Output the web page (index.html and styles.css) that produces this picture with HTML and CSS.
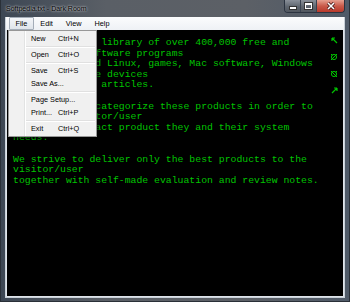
FILE: index.html
```html
<!DOCTYPE html>
<html>
<head>
<title>Softpedia.txt - Dark Room</title>
<meta charset="UTF-8">
<link rel="stylesheet" href="styles.css">
</head>
<body>
<div class="window">
<div class="titlebar">
<span class="title">Softpedia.txt - Dark Room</span>
<div class="caption-btns">
<div class="cbtn min"><span class="min-glyph"></span></div>
<div class="cbtn max"><span class="max-glyph"></span></div>
<div class="cbtn close">
<svg width="10" height="8" viewBox="0 0 10 8"><path d="M2 1 L8 7 M8 1 L2 7" stroke="#3a1010" stroke-width="3"/><path d="M2 1 L8 7 M8 1 L2 7" stroke="#fff" stroke-width="1.6"/></svg>
</div>
</div>
</div>
<div class="client">
<div class="menubar">
<span class="menu-item active">File</span>
<span class="menu-item">Edit</span>
<span class="menu-item">View</span>
<span class="menu-item">Help</span>
</div>
<div class="editor">
<pre class="doc">Softpedia is a library of over 400,000 free and
free-to-try software programs
for Windows and Linux, games, Mac software, Windows
drivers, mobile devices
and IT-related articles.

We review and categorize these products in order to
allow the visitor/user
to find the exact product they and their system
needs.

We strive to deliver only the best products to the
visitor/user
together with self-made evaluation and review notes.</pre>
<div class="side-icons">
<svg width="7" height="7" viewBox="0 0 7 7"><path d="M1 1 L6 6 M1 1 L4 1 M1 1 L1 4" stroke="#00c400" stroke-width="1.2" fill="none"/></svg>
<svg width="8" height="8" viewBox="0 0 8 8"><circle cx="4" cy="4" r="2.6" stroke="#00c400" stroke-width="1" fill="none"/><path d="M1 7 L7 1 M1 1 L2.5 2.5" stroke="#00c400" stroke-width="1" fill="none"/></svg>
<svg width="8" height="8" viewBox="0 0 8 8"><circle cx="4" cy="4" r="2.6" stroke="#00c400" stroke-width="1" fill="none"/><path d="M1 1 L7 7 M7 1 L5.5 2.5" stroke="#00c400" stroke-width="1" fill="none"/></svg>
<svg width="7" height="7" viewBox="0 0 7 7"><path d="M1 6 L6 1 M6 1 L3 1 M6 1 L6 4" stroke="#00c400" stroke-width="1.2" fill="none"/></svg>
</div>
</div>
</div>
<div class="dropdown">
<div class="dd-row"><span class="dd-label">New</span><span class="dd-key">Ctrl+N</span></div>
<div class="dd-sep"></div>
<div class="dd-row"><span class="dd-label">Open</span><span class="dd-key">Ctrl+O</span></div>
<div class="dd-sep"></div>
<div class="dd-row"><span class="dd-label">Save</span><span class="dd-key">Ctrl+S</span></div>
<div class="dd-row"><span class="dd-label">Save As...</span><span class="dd-key"></span></div>
<div class="dd-sep"></div>
<div class="dd-row"><span class="dd-label">Page Setup...</span><span class="dd-key"></span></div>
<div class="dd-row"><span class="dd-label">Print...</span><span class="dd-key">Ctrl+P</span></div>
<div class="dd-sep"></div>
<div class="dd-row"><span class="dd-label">Exit</span><span class="dd-key">Ctrl+Q</span></div>
</div>
</div>
</body>
</html>
```
FILE: styles.css
```css
body {
    margin: 0;
    font-family: "Liberation Sans", Arial, sans-serif;
    background: #fff;
}
.window {
    position: relative;
    width: 350px;
    height: 302px;
    box-sizing: border-box;
    display: flex;
    flex-direction: column;
    padding: 0 4px 3px 4px;
    background: linear-gradient(90deg, #3d4754 0%, #5a5f66 30%, #5c6066 70%, #4f5a68 100%);
    border: 1px solid #2a3038;
    border-top: none;
}
.titlebar {
    height: 17px;
    display: flex;
    justify-content: space-between;
    align-items: flex-start;
}
.title {
    font-size: 7px;
    color: #000;
    margin: 5px 0 0 1px;
    text-shadow: 0 0 3px rgba(255,255,255,0.7), 0 0 2px rgba(255,255,255,0.6);
}
.caption-btns {
    display: flex;
    margin-right: 0;
    border: 1px solid #2b3340;
    border-top: none;
    border-radius: 0 0 4px 4px;
    overflow: hidden;
}
.cbtn {
    height: 12px;
    display: flex;
    align-items: center;
    justify-content: center;
    border-left: 1px solid #3a4350;
}
.cbtn.min, .cbtn.max {
    width: 15px;
    background: linear-gradient(#8a9099, #5f666f 55%, #50565e);
}
.cbtn.min {
    border-left: none;
}
.cbtn.close {
    width: 27px;
    background: linear-gradient(#e6a090, #c95a4a 50%, #b8382a);
}
.min-glyph {
    width: 6px;
    height: 2px;
    background: #fff;
    border: 1px solid #333;
    margin-top: 4px;
}
.max-glyph {
    width: 5px;
    height: 3px;
    border: 1px solid #fff;
    border-top-width: 2px;
    outline: 1px solid #333;
}
.client {
    flex: 1;
    display: flex;
    flex-direction: column;
    border: 1px solid #c8d0d8;
    border-top: none;
    background: #dfe4ea;
    padding: 0 1px 1px 1px;
}
.menubar {
    height: 13px;
    display: flex;
    align-items: center;
    padding-left: 3px;
    margin: 0 -1px;
    background: linear-gradient(#fbfcfd, #eef1f5);
}
.menu-item {
    font-size: 7.3px;
    color: #000;
    padding: 1px 5.5px;
    line-height: 9px;
    border: 1px solid transparent;
}
.menu-item.active {
    border-color: #a4adb8;
    background: linear-gradient(#f4f6f9, #dfe4ea);
    border-radius: 1px;
}
.editor {
    flex: 1;
    display: flex;
    justify-content: space-between;
    background: #000;
}
.doc {
    margin: 0;
    padding: 8px 0 0 6px;
    font-family: "Liberation Mono", "Courier New", monospace;
    font-size: 9.8px;
    line-height: 10.6px;
    color: #00c400;
}
.side-icons {
    display: flex;
    flex-direction: column;
    align-items: center;
    gap: 9px;
    padding: 7px 5px 0 0;
}
.dropdown {
    position: absolute;
    left: 7px;
    top: 30px;
    width: 89px;
    box-sizing: border-box;
    padding: 1px;
    background: linear-gradient(90deg, #f1f1f1 0, #f1f1f1 15px, #e2e3e3 15px, #e2e3e3 16px, #fff 16px, #fff 17px, #f0f0f0 17px);
    border: 1px solid #979797;
    box-shadow: 2px 2px 2px rgba(0,0,0,0.45);
}
.dd-row {
    height: 13px;
    display: flex;
    align-items: center;
    font-size: 7.3px;
    color: #000;
}
.dd-label {
    width: 27px;
    padding-left: 21px;
    white-space: nowrap;
}
.dd-key {
    padding-left: 0;
}
.dd-sep {
    height: 3px;
    margin-left: 16px;
    background: linear-gradient(transparent 1px, #e0e0e0 1px, #e0e0e0 2px, #fff 2px);
}
```
